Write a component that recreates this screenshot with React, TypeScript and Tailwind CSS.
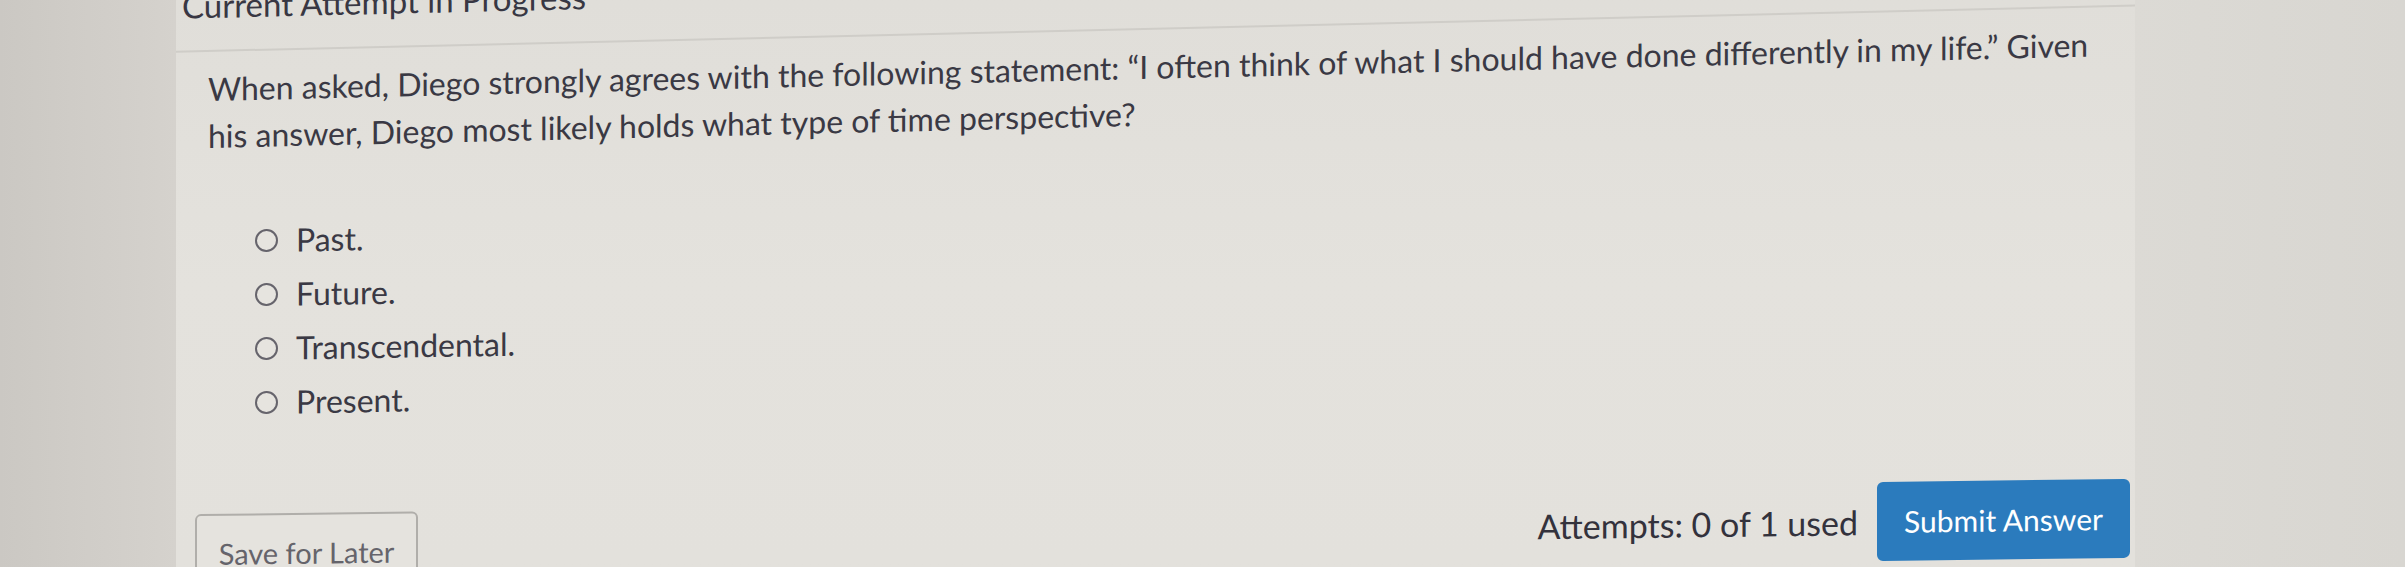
import React from "react";

const font = { fontFamily: "Lato, 'Open Sans', 'Liberation Sans', sans-serif" };

function Radio() {
  return (
    <span className="block h-[23px] w-[23px] shrink-0 rounded-full border-[2px] border-[#66646c] bg-[#e6e4df]" />
  );
}

export default function App() {
  const options = ["Past.", "Future.", "Transcendental.", "Present."];
  return (
    <div
      className="flex h-[567px] w-[2405px] overflow-hidden bg-[#dad8d3] text-[#3a3944]"
      style={font}
    >
      <div className="h-full w-[176px] shrink-0 bg-gradient-to-r from-[#cbc8c3] to-[#d5d2cd]" />
      <div className="flex h-full w-[1959px] shrink-0 flex-col bg-gradient-to-b from-[#e0ded9] via-[#e4e2dd] to-[#e3e1dc]">
        {/* header + question */}
        <div className="origin-[32px_0] [transform:skewY(-1.35deg)]">
          <h2 className="mt-[-11px] pl-[6px] text-[33px] leading-[33px] font-normal text-[#383743]">
            Current Attempt in Progress
          </h2>
          <div className="mt-[28px] h-[2px] w-full bg-[#cfcdc8]" />
          <p className="mt-[13px] pl-[32px] text-[32px] leading-[47px] whitespace-nowrap">
            When asked, Diego strongly agrees with the following statement: “I often think of what I should have done differently in my life.” Given
            <br />
            his answer, Diego most likely holds what type of time perspective?
          </p>
        </div>
        {/* options */}
        <div className="mt-[55px] origin-[32px_0] [transform:skewY(-1deg)]">
          <ul className="flex flex-col pl-[79px]">
            {options.map((o) => (
              <li key={o} className="flex h-[54px] items-center gap-[18px]">
                <Radio />
                <span className="text-[32px] leading-[54px]">{o}</span>
              </li>
            ))}
          </ul>
        </div>
        {/* footer */}
        <div className="mt-[73px] flex origin-[32px_0] items-start justify-between pr-[5px] pl-[19px] [transform:skewY(-0.72deg)]">
          <button className="mt-[11px] flex h-[80px] w-[223px] shrink-0 items-center justify-center rounded-[6px] border-[2px] border-[#b0aeaa] bg-[#e5e3de] text-[29px] text-[#65646b]">
            Save for Later
          </button>
          <div className="flex items-center gap-[19px]">
            <span className="text-[34px] text-[#33323c] whitespace-nowrap">Attempts: 0 of 1 used</span>
            <button className="flex h-[79px] w-[253px] shrink-0 items-center justify-center rounded-[6px] bg-[#2b7bbd] text-[30px] text-white">
              Submit Answer
            </button>
          </div>
        </div>
      </div>
      <div className="h-full flex-1 bg-gradient-to-r from-[#dcdad5] to-[#d8d6d1]" />
    </div>
  );
}
